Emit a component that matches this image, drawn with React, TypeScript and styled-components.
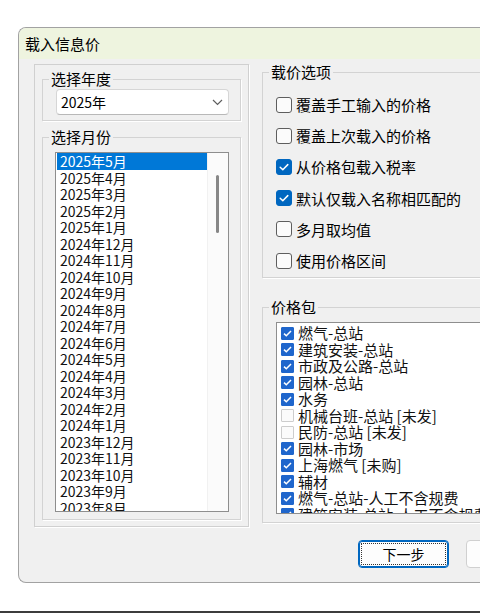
import React from "react";
import styled, { createGlobalStyle } from "styled-components";

const GlobalStyle = createGlobalStyle`
  html, body {
    margin: 0;
    padding: 0;
    background: #ffffff;
  }
  body {
    font-family: "Noto Sans CJK SC", "Microsoft YaHei", sans-serif;
    color: #000;
  }
`;

const Screen = styled.div`
  width: 480px;
  height: 613px;
  box-sizing: border-box;
  padding-top: 27px;
  display: flex;
  flex-direction: column;
  overflow: hidden;
`;

const Window = styled.div`
  margin-left: 18px;
  width: 554px;
  height: 556px;
  flex-shrink: 0;
  box-sizing: border-box;
  display: flex;
  flex-direction: column;
  background: #f0f0f0;
  border: 1px solid #a2a2a2;
  border-right: none;
  border-radius: 8px 0 0 8px;
  overflow: hidden;
`;

const TitleBar = styled.div`
  height: 31px;
  line-height: 31px;
  padding-left: 6px;
  font-size: 15px;
  background: #eef4df;
`;

const Body = styled.div`
  display: flex;
  align-items: flex-start;
  gap: 13px;
  padding: 4px 15px 0 15px;
`;

const SidePanel = styled.div`
  margin-top: 1px;
  width: 215px;
  flex-shrink: 0;
  box-sizing: border-box;
  display: flex;
  flex-direction: column;
  gap: 7px;
  padding: 5px 7px 6px 7px;
  border: 1px solid #d0d0d0;
  box-shadow: 1px 1px 0 #ffffff;
`;

const RightColumn = styled.div`
  flex: 1;
  min-width: 0;
  display: flex;
  flex-direction: column;
  gap: 20px;
`;

// group box; the caption keeps the same inset whatever the padding
const Group = styled.fieldset<{ $top: number; $right: number; $bottom: number; $left: number }>`
  margin: 0;
  min-width: 0;
  padding: ${(p) => `${p.$top}px ${p.$right}px ${p.$bottom}px ${p.$left}px`};
  border: 1px solid #d3d3d3;
  box-shadow: 1px 1px 0 #ffffff;

  > legend {
    margin-left: ${(p) => 6 - p.$left}px;
  }
`;

const Legend = styled.legend`
  padding: 0 2px;
  font-size: 15px;
  line-height: 18px;
`;

const Combo = styled.div`
  height: 26px;
  box-sizing: border-box;
  display: flex;
  align-items: center;
  justify-content: space-between;
  padding: 0 5px 0 4px;
  background: #ffffff;
  border: 1px solid #d6d6d6;
  border-bottom-color: #b8b8b8;
  border-radius: 4px;
  font-size: 14px;
`;

const ListFrame = styled.div<{ $height: number }>`
  height: ${(p) => p.$height}px;
  box-sizing: border-box;
  display: flex;
  background: #ffffff;
  border: 1px solid #8e8e8e;
  overflow: hidden;
`;

const MonthColumn = styled.div`
  width: 151px;
  flex-shrink: 0;
  padding-left: 1px;
  box-sizing: border-box;
`;

const MonthItem = styled.div<{ $selected?: boolean }>`
  height: 16.5px;
  line-height: 16.5px;
  padding-left: 3px;
  font-size: 14px;
  white-space: nowrap;
  background: ${(p) => (p.$selected ? "#0078d7" : "transparent")};
  color: ${(p) => (p.$selected ? "#ffffff" : "#111")};
`;

const ScrollTrack = styled.div`
  flex: 1;
  background: #fbfbfb;
  border-left: 1px solid #f1f1f1;
`;

const ScrollThumb = styled.div`
  width: 3px;
  height: 58px;
  margin: 22px 0 0 8px;
  border-radius: 2px;
  background: #878787;
`;

const OptionRow = styled.label`
  height: 31.2px;
  display: flex;
  align-items: center;
  gap: 4px;
  font-size: 15px;
  white-space: nowrap;
`;

const Box = styled.span<{ $checked: boolean; $size: number }>`
  width: ${(p) => p.$size}px;
  height: ${(p) => p.$size}px;
  flex-shrink: 0;
  box-sizing: border-box;
  display: flex;
  align-items: center;
  justify-content: center;
  border-radius: ${(p) => (p.$size > 14 ? 3 : 1)}px;
  border: 1px solid
    ${(p) => (p.$checked ? (p.$size > 14 ? "#0067c0" : "#1f66cc") : p.$size > 14 ? "#5e5e5e" : "#cdcdcd")};
  background: ${(p) => (p.$checked ? (p.$size > 14 ? "#0067c0" : "#1f66cc") : "#fbfbfb")};
`;

const PackColumn = styled.div`
  flex: 1;
  padding-top: 2px;
`;

const PackItem = styled.div`
  height: 16.5px;
  display: flex;
  align-items: center;
  gap: 4px;
  padding-left: 4px;
  font-size: 15px;
  line-height: 16.5px;
  white-space: nowrap;
  color: #111;
`;

const Footer = styled.div`
  display: flex;
  justify-content: flex-end;
  gap: 17px;
  padding: 13px 15px 0 0;
`;

const Button = styled.button<{ $default?: boolean }>`
  width: 91px;
  height: 28px;
  padding: 0;
  font-family: inherit;
  font-size: 14px;
  color: #000;
  background: #fdfdfd;
  border-radius: 4px;
  border: 1px solid ${(p) => (p.$default ? "#0067c0" : "#d0d0d0")};
  box-shadow: ${(p) => (p.$default ? "inset 0 0 0 1px #0067c0" : "none")};
  outline: ${(p) => (p.$default ? "1px dotted #333" : "none")};
  outline-offset: -4px;
`;

const Spacer = styled.div`
  flex: 1;
`;

const TaskbarEdge = styled.div`
  height: 2px;
  flex-shrink: 0;
  background: #3c3c3c;
`;

function Check({ size }: { size: number }) {
  if (size > 14) {
    return (
      <svg width="12" height="12" viewBox="0 0 12 12">
        <path d="M2.2 6.3 L4.8 8.7 L9.8 3.6" fill="none" stroke="#fff" strokeWidth="1.5" strokeLinecap="round" strokeLinejoin="round" />
      </svg>
    );
  }
  return (
    <svg width="11" height="11" viewBox="0 0 11 11">
      <path d="M2 5.6 L4.3 7.8 L9 3" fill="none" stroke="#fff" strokeWidth="1.5" />
    </svg>
  );
}

function CheckBox({ checked, size }: { checked: boolean; size: number }) {
  return (
    <Box $checked={checked} $size={size}>
      {checked && <Check size={size} />}
    </Box>
  );
}

function Chevron() {
  return (
    <svg width="11" height="7" viewBox="0 0 11 7">
      <path d="M1 1 L5.5 5.5 L10 1" fill="none" stroke="#5f5f5f" strokeWidth="1.2" />
    </svg>
  );
}

const months: string[] = [];
for (let m = 5; m >= 1; m--) months.push(`2025年${m}月`);
for (let m = 12; m >= 1; m--) months.push(`2024年${m}月`);
for (let m = 12; m >= 1; m--) months.push(`2023年${m}月`);

const options = [
  { label: "覆盖手工输入的价格", checked: false },
  { label: "覆盖上次载入的价格", checked: false },
  { label: "从价格包载入税率", checked: true },
  { label: "默认仅载入名称相匹配的", checked: true },
  { label: "多月取均值", checked: false },
  { label: "使用价格区间", checked: false },
];

const packs = [
  { label: "燃气-总站", checked: true },
  { label: "建筑安装-总站", checked: true },
  { label: "市政及公路-总站", checked: true },
  { label: "园林-总站", checked: true },
  { label: "水务", checked: true },
  { label: "机械台班-总站 [未发]", checked: false },
  { label: "民防-总站 [未发]", checked: false },
  { label: "园林-市场", checked: true },
  { label: "上海燃气 [未购]", checked: true },
  { label: "辅材", checked: true },
  { label: "燃气-总站-人工不含规费", checked: true },
  { label: "建筑安装-总站-人工不含规费", checked: true },
];

export default function App() {
  return (
    <>
      <GlobalStyle />
      <Screen>
        <Window>
          <TitleBar>载入信息价</TitleBar>
          <Body>
            <SidePanel>
              <Group $top={1} $right={11} $bottom={5} $left={13}>
                <Legend>选择年度</Legend>
                <Combo>
                  <span>2025年</span>
                  <Chevron />
                </Combo>
              </Group>
              <Group $top={6} $right={11} $bottom={7} $left={12}>
                <Legend>选择月份</Legend>
                <ListFrame $height={360}>
                  <MonthColumn>
                    {months.map((m, i) => (
                      <MonthItem key={m} $selected={i === 0}>
                        {m}
                      </MonthItem>
                    ))}
                  </MonthColumn>
                  <ScrollTrack>
                    <ScrollThumb />
                  </ScrollTrack>
                </ListFrame>
              </Group>
            </SidePanel>

            <RightColumn>
              <Group $top={8} $right={12} $bottom={1} $left={13}>
                <Legend>载价选项</Legend>
                {options.map((o) => (
                  <OptionRow key={o.label}>
                    <CheckBox checked={o.checked} size={16} />
                    {o.label}
                  </OptionRow>
                ))}
              </Group>
              <Group $top={6} $right={11} $bottom={8} $left={13}>
                <Legend>价格包</Legend>
                <ListFrame $height={192}>
                  <PackColumn>
                    {packs.map((p) => (
                      <PackItem key={p.label}>
                        <CheckBox checked={p.checked} size={13} />
                        {p.label}
                      </PackItem>
                    ))}
                  </PackColumn>
                </ListFrame>
              </Group>
            </RightColumn>
          </Body>
          <Footer>
            <Button $default>下一步</Button>
            <Button>取消</Button>
          </Footer>
        </Window>
        <Spacer />
        <TaskbarEdge />
      </Screen>
    </>
  );
}
